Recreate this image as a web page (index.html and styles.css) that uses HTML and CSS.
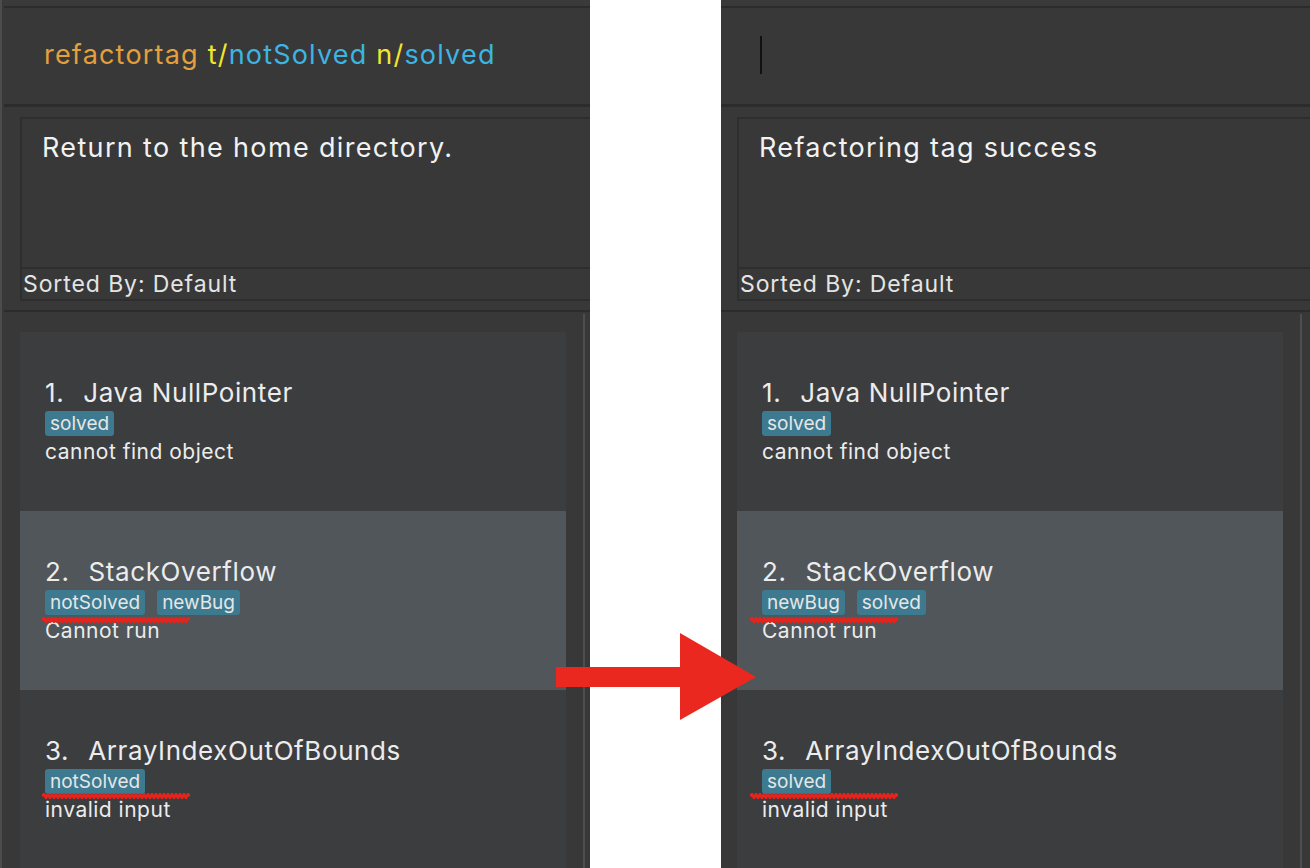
FILE: index.html
```html
<!DOCTYPE html>
<html>
<head>
<meta charset="utf-8">
<link rel="stylesheet" href="styles.css">
</head>
<body>
<div class="screen">
  <section class="panel panel--left">
    <div class="topstrip"></div>
    <div class="command">
      <span class="cmd-word">refactortag</span>&nbsp;<span class="cmd-prefix">t/</span><span class="cmd-value">notSolved</span>&nbsp;<span class="cmd-prefix">n/</span><span class="cmd-value">solved</span>
    </div>
    <div class="result-wrap">
      <div class="result">
        <div class="message">Return to the home directory.</div>
        <div class="sorted">Sorted By: Default</div>
      </div>
    </div>
    <div class="list-area">
      <div class="cards">
        <div class="card">
          <div class="title"><span class="num">1.</span><span>Java NullPointer</span></div>
          <div class="tags"><span class="tag">solved</span></div>
          <div class="desc">cannot find object</div>
        </div>
        <div class="card card--selected">
          <div class="title"><span class="num">2.</span><span>StackOverflow</span></div>
          <div class="tags"><span class="tag">notSolved</span><span class="tag">newBug</span></div>
          <div class="desc">Cannot run</div>
          <svg class="squiggle" viewBox="0 0 148 6" width="148" height="6"><path d="M0 3 L2 1 L4 5 L6 1 L8 5 L10 1 L12 5 L14 1 L16 5 L18 1 L20 5 L22 1 L24 5 L26 1 L28 5 L30 1 L32 5 L34 1 L36 5 L38 1 L40 5 L42 1 L44 5 L46 1 L48 5 L50 1 L52 5 L54 1 L56 5 L58 1 L60 5 L62 1 L64 5 L66 1 L68 5 L70 1 L72 5 L74 1 L76 5 L78 1 L80 5 L82 1 L84 5 L86 1 L88 5 L90 1 L92 5 L94 1 L96 5 L98 1 L100 5 L102 1 L104 5 L106 1 L108 5 L110 1 L112 5 L114 1 L116 5 L118 1 L120 5 L122 1 L124 5 L126 1 L128 5 L130 1 L132 5 L134 1 L136 5 L138 1 L140 5 L142 1 L144 5 L146 1 L148 3"/></svg>
        </div>
        <div class="card">
          <div class="title"><span class="num">3.</span><span>ArrayIndexOutOfBounds</span></div>
          <div class="tags"><span class="tag">notSolved</span></div>
          <div class="desc">invalid input</div>
          <svg class="squiggle squiggle--low" viewBox="0 0 148 6" width="148" height="6"><path d="M0 3 L2 1 L4 5 L6 1 L8 5 L10 1 L12 5 L14 1 L16 5 L18 1 L20 5 L22 1 L24 5 L26 1 L28 5 L30 1 L32 5 L34 1 L36 5 L38 1 L40 5 L42 1 L44 5 L46 1 L48 5 L50 1 L52 5 L54 1 L56 5 L58 1 L60 5 L62 1 L64 5 L66 1 L68 5 L70 1 L72 5 L74 1 L76 5 L78 1 L80 5 L82 1 L84 5 L86 1 L88 5 L90 1 L92 5 L94 1 L96 5 L98 1 L100 5 L102 1 L104 5 L106 1 L108 5 L110 1 L112 5 L114 1 L116 5 L118 1 L120 5 L122 1 L124 5 L126 1 L128 5 L130 1 L132 5 L134 1 L136 5 L138 1 L140 5 L142 1 L144 5 L146 1 L148 3"/></svg>
        </div>
      </div>
      <div class="scrollbar"></div>
    </div>
  </section>

  <div class="gap"></div>

  <section class="panel panel--right">
    <div class="topstrip"></div>
    <div class="command">
      <span class="caret"></span>
    </div>
    <div class="result-wrap">
      <div class="result">
        <div class="message">Refactoring tag success</div>
        <div class="sorted">Sorted By: Default</div>
      </div>
    </div>
    <div class="list-area">
      <div class="cards">
        <div class="card">
          <div class="title"><span class="num">1.</span><span>Java NullPointer</span></div>
          <div class="tags"><span class="tag">solved</span></div>
          <div class="desc">cannot find object</div>
        </div>
        <div class="card card--selected">
          <div class="title"><span class="num">2.</span><span>StackOverflow</span></div>
          <div class="tags"><span class="tag">newBug</span><span class="tag">solved</span></div>
          <div class="desc">Cannot run</div>
          <svg class="squiggle" viewBox="0 0 148 6" width="148" height="6"><path d="M0 3 L2 1 L4 5 L6 1 L8 5 L10 1 L12 5 L14 1 L16 5 L18 1 L20 5 L22 1 L24 5 L26 1 L28 5 L30 1 L32 5 L34 1 L36 5 L38 1 L40 5 L42 1 L44 5 L46 1 L48 5 L50 1 L52 5 L54 1 L56 5 L58 1 L60 5 L62 1 L64 5 L66 1 L68 5 L70 1 L72 5 L74 1 L76 5 L78 1 L80 5 L82 1 L84 5 L86 1 L88 5 L90 1 L92 5 L94 1 L96 5 L98 1 L100 5 L102 1 L104 5 L106 1 L108 5 L110 1 L112 5 L114 1 L116 5 L118 1 L120 5 L122 1 L124 5 L126 1 L128 5 L130 1 L132 5 L134 1 L136 5 L138 1 L140 5 L142 1 L144 5 L146 1 L148 3"/></svg>
        </div>
        <div class="card">
          <div class="title"><span class="num">3.</span><span>ArrayIndexOutOfBounds</span></div>
          <div class="tags"><span class="tag">solved</span></div>
          <div class="desc">invalid input</div>
          <svg class="squiggle squiggle--low" viewBox="0 0 148 6" width="148" height="6"><path d="M0 3 L2 1 L4 5 L6 1 L8 5 L10 1 L12 5 L14 1 L16 5 L18 1 L20 5 L22 1 L24 5 L26 1 L28 5 L30 1 L32 5 L34 1 L36 5 L38 1 L40 5 L42 1 L44 5 L46 1 L48 5 L50 1 L52 5 L54 1 L56 5 L58 1 L60 5 L62 1 L64 5 L66 1 L68 5 L70 1 L72 5 L74 1 L76 5 L78 1 L80 5 L82 1 L84 5 L86 1 L88 5 L90 1 L92 5 L94 1 L96 5 L98 1 L100 5 L102 1 L104 5 L106 1 L108 5 L110 1 L112 5 L114 1 L116 5 L118 1 L120 5 L122 1 L124 5 L126 1 L128 5 L130 1 L132 5 L134 1 L136 5 L138 1 L140 5 L142 1 L144 5 L146 1 L148 3"/></svg>
        </div>
      </div>
      <div class="scrollbar"></div>
    </div>
  </section>

  <svg class="arrow" viewBox="0 0 200 88" width="200" height="88">
    <polygon points="0,34 124,34 124,0 200,44 124,87 124,54 0,54"/>
  </svg>
</div>
</body>
</html>
```

FILE: styles.css
```css
* { box-sizing: border-box; }

html, body {
  margin: 0;
  padding: 0;
  background: #ffffff;
}

body {
  font-family: Inter, Roboto, "Liberation Sans", sans-serif;
  color: #ececec;
}

.screen {
  position: relative;
  display: flex;
  width: 1310px;
  height: 868px;
  overflow: hidden;
}

.panel {
  display: flex;
  flex-direction: column;
  height: 868px;
  background: #383838;
  overflow: hidden;
}

.panel--left {
  width: 590px;
  border-left: 2px solid #4c4c4c;
  padding-left: 2px;
}

.panel--right {
  width: 589px;
}

.gap {
  width: 131px;
  flex: none;
  background: #ffffff;
}

.topstrip {
  height: 8px;
  flex: none;
  background: #3a3a3a;
  border-bottom: 2px solid #2c2c2c;
}

.command {
  height: 99px;
  flex: none;
  display: flex;
  align-items: center;
  padding-left: 40px;
  padding-bottom: 3px;
  font-size: 27px;
  letter-spacing: 1.2px;
  border-bottom: 3px solid #2c2c2c;
  white-space: nowrap;
}

.cmd-word { color: #e3a03c; }
.cmd-prefix { color: #f2e62c; }
.cmd-value { color: #3db4e2; }

.caret {
  display: block;
  width: 2px;
  height: 38px;
  margin-left: -1px;
  background: #111111;
}

.result-wrap {
  flex: none;
  padding: 10px 0 9px 16px;
  border-bottom: 2px solid #2c2c2c;
}

.result {
  height: 184px;
  margin-right: -4px;
  display: flex;
  flex-direction: column;
  border: 2px solid #2e2e2e;
  border-right: none;
}

.message {
  flex: 1;
  padding: 14px 0 0 20px;
  font-size: 27px;
  line-height: 30px;
  letter-spacing: 1.35px;
  color: #f2f2f2;
}

.sorted {
  height: 32px;
  padding: 1px 0 0 1px;
  border-top: 2px solid #2e2e2e;
  font-size: 23px;
  line-height: 28px;
  letter-spacing: 0.9px;
  color: #e4e4e4;
}

.list-area {
  flex: 1;
  display: flex;
  padding-top: 20px;
}

.cards {
  width: 546px;
  margin-left: 16px;
  flex: none;
  display: flex;
  flex-direction: column;
}

.scrollbar {
  width: 2px;
  margin-left: 17px;
  margin-top: -18px;
  background: #4e4e4e;
}

.card {
  position: relative;
  height: 179px;
  flex: none;
  padding: 46px 0 0 25px;
  background: #3c3d3f;
}

.card--selected {
  background: #50565a;
}

.title {
  display: flex;
  gap: 19px;
  font-size: 26px;
  line-height: 30px;
  letter-spacing: 0.6px;
  color: #ececec;
  white-space: nowrap;
}

.tags {
  display: flex;
  gap: 12px;
  margin-top: 3px;
}

.tag {
  height: 25px;
  padding: 0 5px;
  border-radius: 3px;
  background: #3d7a8f;
  font-size: 19px;
  line-height: 25px;
  color: #e6e6e6;
}

.desc {
  margin-top: 4px;
  font-size: 21px;
  line-height: 24px;
  letter-spacing: 0.5px;
  color: #ececec;
}

.squiggle {
  position: absolute;
  left: 22px;
  top: 106px;
  fill: none;
  stroke: #e8231c;
  stroke-width: 2.6;
}

.squiggle--low {
  top: 103px;
}

.panel--right .squiggle {
  left: 13px;
}

.arrow {
  position: absolute;
  left: 556px;
  top: 633px;
  fill: #ea281f;
}
```
